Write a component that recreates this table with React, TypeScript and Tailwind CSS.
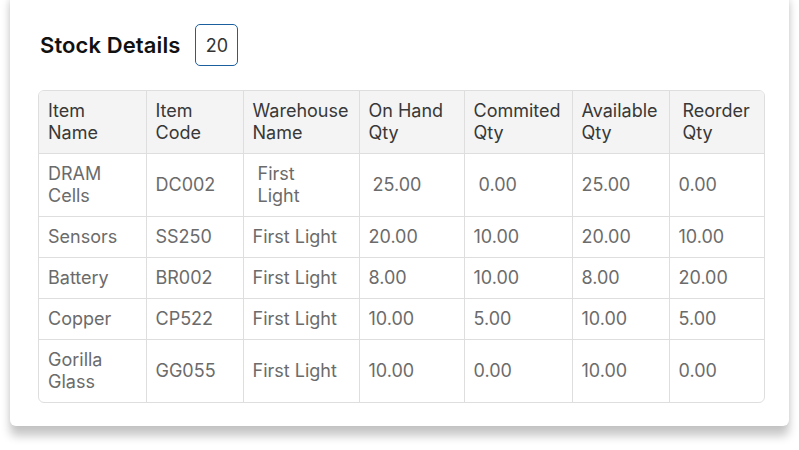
const headers = [
  ["Item", "Name"],
  ["Item", "Code"],
  ["Warehouse", "Name"],
  ["On Hand", "Qty"],
  ["Commited", "Qty"],
  ["Available", "Qty"],
  ["Reorder", "Qty"],
];

const widths = ["w-[107px]", "w-[97px]", "w-[116px]", "w-[105px]", "w-[108px]", "w-[97px]", "w-[97px]"];

const rows = [
  ["Sensors", "SS250", "First Light", "20.00", "10.00", "20.00", "10.00"],
  ["Battery", "BR002", "First Light", "8.00", "10.00", "8.00", "20.00"],
  ["Copper", "CP522", "First Light", "10.00", "5.00", "10.00", "5.00"],
];

const cell = "border-r border-b border-[#dedede] px-[9px] py-[9px] align-middle";

const App = () => {
  return (
    <div className="w-[799px] h-[450px] bg-white overflow-hidden px-[10px] font-['Inter',sans-serif]">
      <div className="-mt-[10px] w-[779px] bg-white rounded-md shadow-[0_10px_10px_rgba(0,0,0,0.22),0_0_6px_rgba(0,0,0,0.06)] px-[28px] pt-[34px] pb-[23px]">
        {/* Title */}
        <div className="flex items-center gap-[15px] ml-[2px]">
          <h2 className="text-[22px] font-semibold text-[#111] tracking-[0.1px]">Stock Details</h2>
          <span className="flex items-center justify-center w-[43px] h-[42px] border border-[#1c5f9f] rounded-[5px] text-[18px] text-[#333]">
            20
          </span>
        </div>

        {/* Table */}
        <div className="mt-[24px] w-[727px] border border-[#dedede] rounded-md overflow-hidden">
          <table className="border-collapse text-[18px] leading-[22px] table-fixed w-[727px]">
            <thead>
              <tr className="bg-[#f4f4f4] text-[#383838]">
                {headers.map((h, i) => (
                  <th
                    key={i}
                    className={`${cell} ${widths[i]} text-left font-normal ${i === 6 ? "border-r-0 pl-[13px]" : ""}`}
                  >
                    {h[0]}
                    <br />
                    {h[1]}
                  </th>
                ))}
              </tr>
            </thead>
            <tbody className="text-[#6b6b6b]">
              <tr>
                <td className={cell}>DRAM<br />Cells</td>
                <td className={cell}>DC002</td>
                <td className={`${cell} pl-[14px]`}>First<br />Light</td>
                <td className={`${cell} pl-[13px]`}>25.00</td>
                <td className={`${cell} pl-[14px]`}>0.00</td>
                <td className={cell}>25.00</td>
                <td className={`${cell} border-r-0`}>0.00</td>
              </tr>
              {rows.map((r, ri) => (
                <tr key={ri}>
                  {r.map((c, ci) => (
                    <td key={ci} className={`${cell} ${ci === 6 ? "border-r-0" : ""}`}>
                      {c}
                    </td>
                  ))}
                </tr>
              ))}
              <tr>
                <td className={`${cell} border-b-0`}>Gorilla<br />Glass</td>
                <td className={`${cell} border-b-0`}>GG055</td>
                <td className={`${cell} border-b-0`}>First Light</td>
                <td className={`${cell} border-b-0`}>10.00</td>
                <td className={`${cell} border-b-0`}>0.00</td>
                <td className={`${cell} border-b-0`}>10.00</td>
                <td className={`${cell} border-b-0 border-r-0`}>0.00</td>
              </tr>
            </tbody>
          </table>
        </div>
      </div>
    </div>
  );
};

export default App;
